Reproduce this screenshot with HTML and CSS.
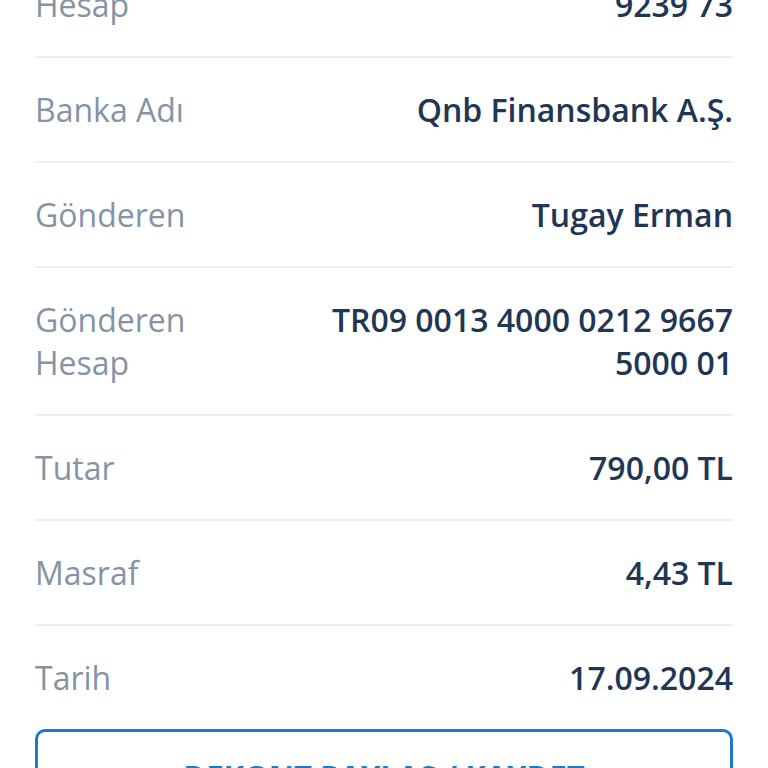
FILE: index.html
```html
<!DOCTYPE html>
<html lang="tr">
<head>
  <meta charset="UTF-8">
  <meta name="viewport" content="width=device-width, initial-scale=1.0">
  <title>Dekont Detayı</title>
  <link rel="stylesheet" href="styles.css">
</head>
<body>
  <div class="receipt">
    <div class="detail-row">
      <span class="label">Alıcı Hesap</span>
      <span class="value">TR12 0011 1000 0000 0123 9239 73</span>
    </div>
    <div class="detail-row">
      <span class="label">Banka Adı</span>
      <span class="value">Qnb Finansbank A.Ş.</span>
    </div>
    <div class="detail-row">
      <span class="label">Gönderen</span>
      <span class="value">Tugay Erman</span>
    </div>
    <div class="detail-row">
      <span class="label">Gönderen Hesap</span>
      <span class="value">TR09 0013 4000 0212 9667 5000 01</span>
    </div>
    <div class="detail-row">
      <span class="label">Tutar</span>
      <span class="value">790,00 TL</span>
    </div>
    <div class="detail-row">
      <span class="label">Masraf</span>
      <span class="value">4,43 TL</span>
    </div>
    <div class="detail-row">
      <span class="label">Tarih</span>
      <span class="value">17.09.2024</span>
    </div>

    <button class="share-button">DEKONT PAYLAŞ / KAYDET</button>
  </div>
</body>
</html>
```

FILE: styles.css
```css
body {
  font-family: "Open Sans", "Noto Sans", sans-serif;
  margin: 0;
  background-color: #fff;
  color: #1f3655;
  overflow: hidden;
}

.receipt {
  margin-top: -90px;
  padding: 0 35px;
}

.detail-row {
  display: grid;
  grid-template-columns: 150px 1fr;
  gap: 80px;
  padding: 30px 0;
  border-bottom: 2px solid #efefef;
  font-size: 32px;
  line-height: 43px;
}

.detail-row:last-of-type {
  border-bottom: none;
}

.label {
  color: #8593a5;
}

.value {
  text-align: right;
  font-weight: 600;
  color: #1f3655;
}

.share-button {
  display: block;
  width: 100%;
  padding: 23px 0;
  background-color: #fff;
  border: 3px solid #1a7ad0;
  border-radius: 10px;
  color: #1a7ad0;
  font-family: inherit;
  font-size: 31px;
  font-weight: 700;
  cursor: pointer;
}
```
